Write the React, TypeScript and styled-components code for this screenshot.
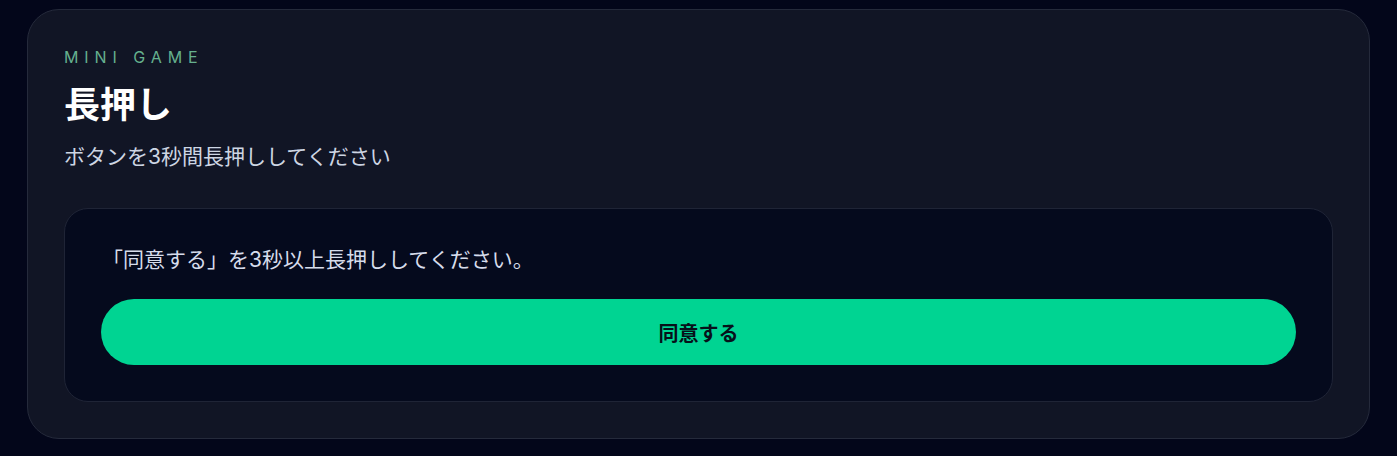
import styled, { createGlobalStyle } from 'styled-components'

const GlobalStyle = createGlobalStyle`
  html, body {
    margin: 0;
    padding: 0;
    background: #03061a;
  }
  body {
    font-family: Inter, "Noto Sans CJK JP", sans-serif;
  }
`

const Page = styled.div`
  padding: 9px 27px 18px 27px;
`

const Card = styled.section`
  background: #111525;
  border: 1px solid #252a3b;
  border-radius: 32px;
  padding: 36px;
`

const Eyebrow = styled.div`
  color: #65b08e;
  font-size: 16px;
  line-height: 22px;
  letter-spacing: 0.37em;
  text-transform: uppercase;
`

const Title = styled.h1`
  margin: 16px 0 0;
  color: #ffffff;
  font-size: 36px;
  line-height: 42px;
  font-weight: 700;
`

const Subtitle = styled.p`
  margin: 16px 0 0;
  color: #cdd5e3;
  font-size: 21px;
  line-height: 30px;
`

const Panel = styled.div`
  margin-top: 36px;
  background: #050a1d;
  border: 1px solid #1f2436;
  border-radius: 24px;
  padding: 36px;
  display: flex;
  flex-direction: column;
  gap: 24px;
`

const Instruction = styled.p`
  margin: 0;
  padding: 0 1px;
  color: #d6dceb;
  font-size: 21px;
  line-height: 30px;
`

const HoldButton = styled.button`
  height: 66px;
  border: none;
  border-radius: 999px;
  background: #00d492;
  color: #07111a;
  font-family: inherit;
  font-size: 20px;
  font-weight: 700;
  cursor: pointer;
`

export default function App() {
  return (
    <>
      <GlobalStyle />
      <Page>
        <Card>
          <Eyebrow>Mini Game</Eyebrow>
          <Title>長押し</Title>
          <Subtitle>ボタンを3秒間長押ししてください</Subtitle>
          <Panel>
            <Instruction>「同意する」を3秒以上長押ししてください。</Instruction>
            <HoldButton>同意する</HoldButton>
          </Panel>
        </Card>
      </Page>
    </>
  )
}
